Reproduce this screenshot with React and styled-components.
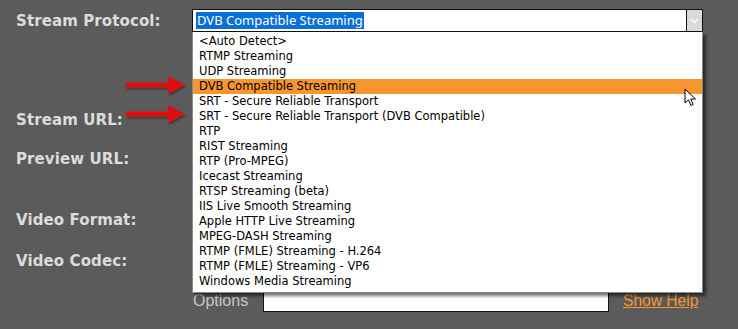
import styled, { createGlobalStyle } from "styled-components";

const GlobalStyle = createGlobalStyle`
  html, body {
    margin: 0;
    padding: 0;
    background: #5b5b5b;
  }
  body {
    font-family: "DejaVu Sans", Verdana, sans-serif;
    overflow: hidden;
  }
`;

const protocols = [
  "<Auto Detect>",
  "RTMP Streaming",
  "UDP Streaming",
  "DVB Compatible Streaming",
  "SRT - Secure Reliable Transport",
  "SRT - Secure Reliable Transport (DVB Compatible)",
  "RTP",
  "RIST Streaming",
  "RTP (Pro-MPEG)",
  "Icecast Streaming",
  "RTSP Streaming (beta)",
  "IIS Live Smooth Streaming",
  "Apple HTTP Live Streaming",
  "MPEG-DASH Streaming",
  "RTMP (FMLE) Streaming - H.264",
  "RTMP (FMLE) Streaming - VP6",
  "Windows Media Streaming",
];

const Page = styled.div`
  position: relative;
  width: 738px;
  height: 329px;
  padding: 9px 0 0 16px;
  box-sizing: border-box;
`;

const Row = styled.div`
  display: grid;
  grid-template-columns: 176px 511px;
  align-items: center;
  height: ${(p) => p.$h || 24}px;
  margin-top: ${(p) => p.$top || 0}px;
`;

const Label = styled.div`
  color: #dcdcdc;
  font-weight: bold;
  font-size: 15px;
  letter-spacing: 0.1px;
`;

const Field = styled.div`
  position: relative;
  height: 100%;
`;

const Select = styled.div`
  display: flex;
  height: 23px;
  background: #fff;
  border: 1px solid #111;
  box-sizing: border-box;
`;

const SelectValue = styled.div`
  flex: 1;
  display: flex;
  align-items: center;
  padding-left: 3px;
`;

const Highlight = styled.span`
  background: #0a6fd6;
  color: #fff;
  font-family: "Noto Sans", "DejaVu Sans", sans-serif;
  font-size: 13px;
  line-height: 17px;
  padding: 0 1px;
`;

const ArrowButton = styled.div`
  width: 15px;
  background: #dadada;
  border-left: 1px solid #111;
  display: flex;
  align-items: center;
  justify-content: center;
`;

const DropList = styled.ul`
  position: absolute;
  top: 23px;
  left: 0;
  z-index: 2;
  width: 511px;
  margin: 0;
  padding: 2px 0 3px;
  list-style: none;
  background: #fff;
  box-sizing: border-box;
  border: 1px solid #8a8a8a;
  border-top: none;
  box-shadow: 3px 3px 3px rgba(0, 0, 0, 0.55);
`;

const Option = styled.li`
  height: 15px;
  line-height: 15px;
  padding-left: 6px;
  font-family: "DejaVu Sans", Tahoma, sans-serif;
  font-size: 11.5px;
  color: #000;
  white-space: nowrap;
  background: ${(p) => (p.$active ? "#f7952f" : "transparent")};
`;

const OptionsRow = styled.div`
  display: flex;
  align-items: center;
  height: 100%;
`;

const OptionsLabel = styled.span`
  color: #c8c8c8;
  font-family: "Liberation Sans", Arial, sans-serif;
  font-size: 16px;
  width: 70px;
  margin-left: 1px;
`;

const TextInput = styled.div`
  width: 346px;
  height: 23px;
  background: #fff;
  border: 1px solid #111;
  box-sizing: border-box;
`;

const HelpLink = styled.a`
  margin-left: 14px;
  color: #f7952f;
  font-family: "Liberation Sans", Arial, sans-serif;
  font-size: 15.6px;
  text-decoration: underline;
  cursor: pointer;
`;

const Pointer = styled.svg`
  position: absolute;
  left: ${(p) => p.$x}px;
  top: ${(p) => p.$y}px;
  z-index: 3;
`;

function RedArrow({ x, y }) {
  return (
    <Pointer $x={x} $y={y} width="64" height="22" viewBox="0 0 64 22">
      <defs>
        <filter id="sh" x="-10%" y="-20%" width="130%" height="160%">
          <feDropShadow dx="1" dy="1.5" stdDeviation="1" floodColor="#000" floodOpacity="0.45" />
        </filter>
      </defs>
      <path d="M1 7.5 H43 V1 L60 10 L43 19 V12.5 H1 Z" fill="#e10f0f" filter="url(#sh)" />
    </Pointer>
  );
}

function MouseCursor({ x, y }) {
  return (
    <Pointer $x={x} $y={y} width="14" height="20" viewBox="0 0 14 20">
      <path
        d="M1 1 V15 L4.5 11.8 L7 17.5 L9.2 16.5 L6.8 11 H11.5 Z"
        fill="#fff"
        stroke="#000"
        strokeWidth="1"
        strokeLinejoin="round"
      />
    </Pointer>
  );
}

function Chevron() {
  return (
    <svg width="9" height="6" viewBox="0 0 9 6">
      <path d="M1 1 L4.5 4.5 L8 1" fill="none" stroke="#fff" strokeWidth="1.3" />
    </svg>
  );
}

export default function App() {
  const selected = "DVB Compatible Streaming";

  return (
    <>
      <GlobalStyle />
      <Page>
        <Row $h={23}>
          <Label>Stream Protocol:</Label>
          <Field>
            <Select>
              <SelectValue>
                <Highlight>{selected}</Highlight>
              </SelectValue>
              <ArrowButton>
                <Chevron />
              </ArrowButton>
            </Select>
            <DropList>
              {protocols.map((p) => (
                <Option key={p} $active={p === selected}>
                  {p}
                </Option>
              ))}
            </DropList>
          </Field>
        </Row>
        <Row $top={76}>
          <Label>Stream URL:</Label>
        </Row>
        <Row $top={15}>
          <Label>Preview URL:</Label>
        </Row>
        <Row $top={37}>
          <Label>Video Format:</Label>
        </Row>
        <Row $top={17}>
          <Label>Video Codec:</Label>
        </Row>
        <Row $top={16} $h={23}>
          <div />
          <OptionsRow>
            <OptionsLabel>Options</OptionsLabel>
            <TextInput />
            <HelpLink>Show Help</HelpLink>
          </OptionsRow>
        </Row>
        <RedArrow x={125} y={75} />
        <RedArrow x={125} y={104} />
        <MouseCursor x={684} y={88} />
      </Page>
    </>
  );
}
